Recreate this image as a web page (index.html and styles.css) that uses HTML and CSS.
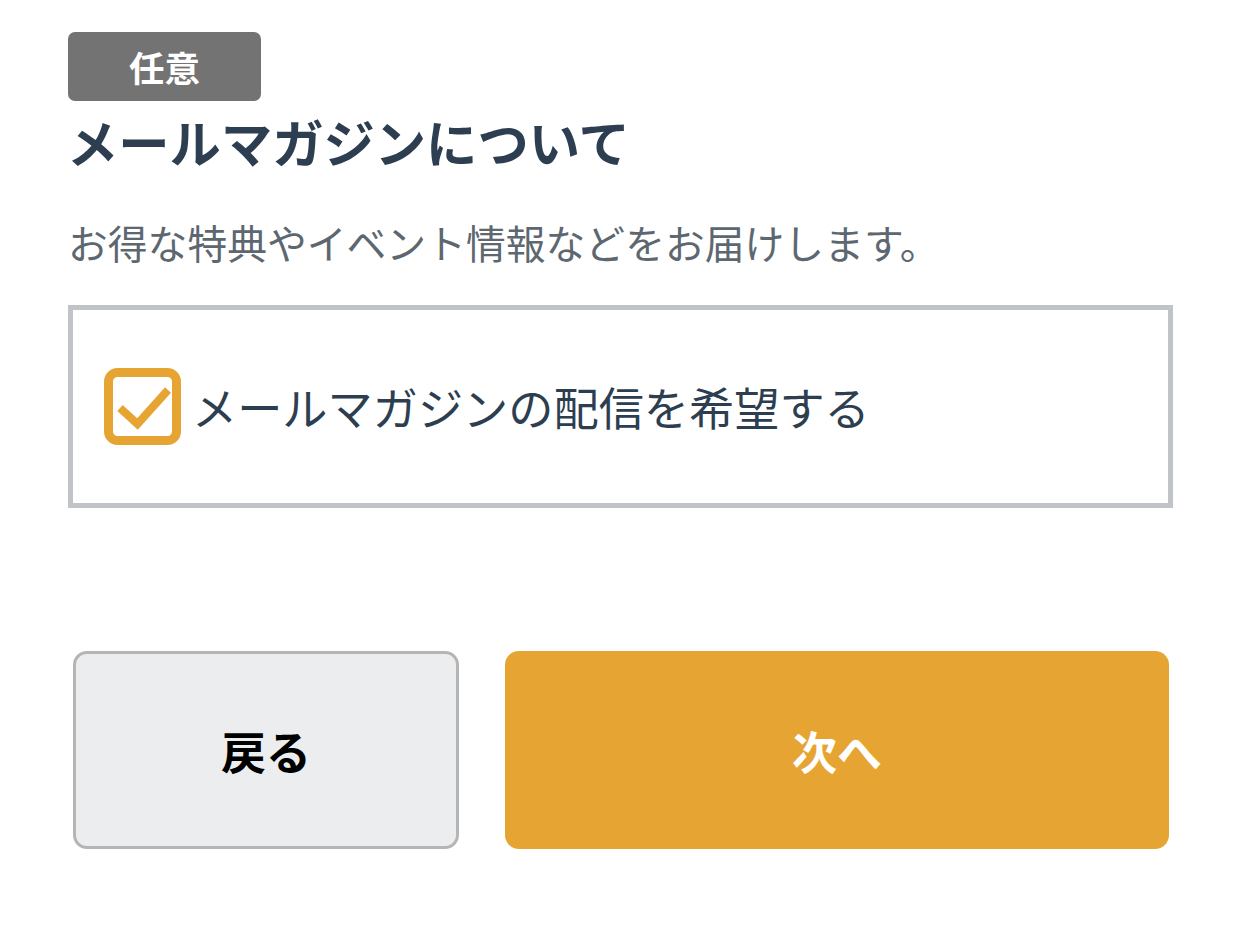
FILE: index.html
```html
<!DOCTYPE html>
<html lang="ja">
<head>
<meta charset="utf-8">
<link rel="stylesheet" href="styles.css">
</head>
<body>
<div class="page">
  <div class="badge">任意</div>
  <h1 class="title">メールマガジンについて</h1>
  <p class="desc">お得な特典やイベント情報などをお届けします。</p>
  <label class="option">
    <span class="check">
      <svg width="77" height="77" viewBox="0 0 77 77">
        <rect x="4.5" y="4.5" width="68" height="68" rx="9" ry="9" fill="#fff" stroke="#e6a532" stroke-width="9"/>
        <polyline points="16,40 33.5,56 64,22" fill="none" stroke="#e6a532" stroke-width="8"/>
      </svg>
    </span>
    <span class="option-label">メールマガジンの配信を希望する</span>
  </label>
  <div class="actions">
    <button class="btn btn-back">戻る</button>
    <button class="btn btn-next">次へ</button>
  </div>
</div>
</body>
</html>
```
FILE: styles.css
```css
html, body {
  margin: 0;
  padding: 0;
  background: #fff;
}
body {
  font-family: "Noto Sans CJK JP", "Noto Sans", sans-serif;
}
.page {
  padding: 32px 0 0 68px;
  width: 1105px;
}
.badge {
  width: 193px;
  height: 69px;
  background: #737373;
  border-radius: 7px;
  color: #fff;
  font-weight: 700;
  font-size: 35.5px;
  line-height: 69px;
  text-align: center;
}
.title {
  margin: 10px 0 0 -1px;
  font-size: 51.3px;
  line-height: 60px;
  font-weight: 700;
  color: #2c3e50;
  letter-spacing: 0;
}
.desc {
  margin: 46px 0 0 0;
  font-size: 39.8px;
  line-height: 50px;
  color: #5d6770;
  font-weight: 400;
}
.option {
  margin-top: 38px;
  height: 193px;
  border: 5px solid #c0c4c8;
  display: flex;
  align-items: center;
  padding-left: 31px;
  box-sizing: content-box;
}
.check {
  width: 77px;
  height: 77px;
  display: block;
  flex: none;
}
.check svg {
  display: block;
}
.option-label {
  margin-left: 11px;
  font-size: 45.2px;
  line-height: 60px;
  color: #2c3e50;
}
.actions {
  margin: 143px 0 0 5px;
  display: grid;
  grid-template-columns: 386px 664px;
  column-gap: 46px;
}
.btn {
  height: 198px;
  border-radius: 14px;
  font-family: "Noto Sans CJK JP", "Noto Sans", sans-serif;
  font-weight: 700;
  font-size: 45px;
  cursor: pointer;
  padding: 0;
}
.btn-back {
  background: #ecedef;
  border: 3px solid #b5b5b5;
  color: #000;
}
.btn-next {
  background: #e6a532;
  border: none;
  color: #fff;
}
```
